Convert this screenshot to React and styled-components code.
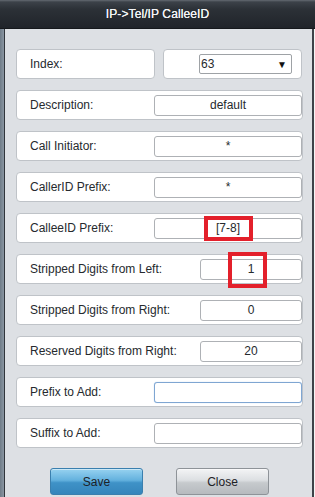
import styled, { createGlobalStyle } from "styled-components";

const GlobalStyle = createGlobalStyle`
  html, body {
    margin: 0;
    padding: 0;
    background: #7f8c98;
    overflow: hidden;
  }
  * {
    box-sizing: border-box;
  }
`;

const Frame = styled.div`
  width: 315px;
  height: 497px;
  display: flex;
  flex-direction: column;
  font-family: "Liberation Sans", Arial, sans-serif;
  font-size: 12px;
  color: #262a2e;
  background: linear-gradient(90deg, #6f7c88 0, #8a96a2 4px, #f4f4f4 313px);
`;

const TitleBar = styled.div`
  height: 29px;
  flex: none;
  display: flex;
  align-items: center;
  justify-content: center;
  color: #f2f4f6;
  font-size: 12px;
  letter-spacing: 0.1px;
  text-shadow: 0 0 0.6px #fff;
  background: linear-gradient(#646a72 0, #3c4249 2px, #2c3137 9px, #20242a 100%);
  border-bottom: 1px solid #15181c;
`;

const Body = styled.div`
  flex: 1;
  margin-left: 4px;
  margin-right: 1px;
  border-left: 1px solid #30353b;
  border-right: 2px solid #3d4248;
  background: #dde0e4;
  padding: 20px 9px 0 11px;
  display: flex;
  flex-direction: column;
  gap: 11px;
`;

const Pair = styled.div`
  display: grid;
  grid-template-columns: 139px 139px;
  gap: 8px;
`;

const Row = styled.div`
  position: relative;
  height: 30px;
  display: flex;
  align-items: center;
  justify-content: space-between;
  background: #fff;
  border: 1px solid #bfc3c8;
  border-radius: 4px;
  padding: 0 0 0 13px;
`;

const Cell = styled(Row)`
  justify-content: ${(p) => (p.$end ? "flex-end" : "flex-start")};
  padding-right: ${(p) => (p.$end ? "9px" : "0")};
`;

const Label = styled.span`
  white-space: nowrap;
`;

const Field = styled.input`
  width: ${(p) => (p.$narrow ? "102px" : "148px")};
  height: 21px;
  border: 1px solid ${(p) => (p.$focus ? "#7fa6d2" : "#aeb1b5")};
  box-shadow: ${(p) => (p.$focus ? "0 0 1px #9cc0e6" : "none")};
  border-radius: 3px;
  background: #fff;
  text-align: center;
  font-family: "Liberation Sans", Arial, sans-serif;
  font-size: 12px;
  color: #262a2e;
  padding: 0 4px;
  outline: none;
`;

const Select = styled.div`
  width: 93px;
  height: 20px;
  border: 1px solid #9ea2a6;
  border-radius: 2px;
  display: flex;
  align-items: center;
  justify-content: space-between;
  padding: 0 4px 0 1px;
  font-size: 12px;
`;

const Caret = styled.span`
  font-size: 10px;
  color: #111;
`;

const Mark = styled.div`
  position: absolute;
  left: ${(p) => p.$x}px;
  top: ${(p) => p.$y}px;
  width: ${(p) => p.$w}px;
  height: ${(p) => p.$h}px;
  border: 4px solid #e3202b;
  pointer-events: none;
`;

const Buttons = styled.div`
  display: flex;
  gap: 33px;
  padding-left: 34px;
  margin-top: 9px;
`;

const Button = styled.button`
  width: 93px;
  height: 27px;
  border-radius: 3px;
  font-family: "Liberation Sans", Arial, sans-serif;
  font-size: 12px;
  color: #1d2126;
  border: 1px solid ${(p) => (p.$primary ? "#3a7fae" : "#8e9398")};
  background: ${(p) =>
    p.$primary
      ? "linear-gradient(#97d2f0 0, #63b1de 45%, #3f92c7 55%, #3585bb 100%)"
      : "linear-gradient(#f3f4f5 0, #dcdfe2 45%, #c6cacd 55%, #b6babe 100%)"};
  box-shadow: inset 0 1px 0 rgba(255, 255, 255, 0.5);
`;

const rows = [
  { label: "Description:", value: "default" },
  { label: "Call Initiator:", value: "*" },
  { label: "CallerID Prefix:", value: "*" },
  { label: "CalleeID Prefix:", value: "[7-8]", mark: { x: 187, y: 2, w: 49, h: 25 } },
  { label: "Stripped Digits from Left:", value: "1", narrow: true, mark: { x: 211, y: -3, w: 39, h: 36 } },
  { label: "Stripped Digits from Right:", value: "0", narrow: true },
  { label: "Reserved Digits from Right:", value: "20", narrow: true },
  { label: "Prefix to Add:", value: "", focus: true },
  { label: "Suffix to Add:", value: "" },
];

export default function App() {
  return (
    <>
      <GlobalStyle />
      <Frame>
        <TitleBar>IP-&gt;Tel/IP CalleeID</TitleBar>
        <Body>
          <Pair>
            <Cell>
              <Label>Index:</Label>
            </Cell>
            <Cell $end>
              <Select>
                <span>63</span>
                <Caret>▼</Caret>
              </Select>
            </Cell>
          </Pair>
          {rows.map((r) => (
            <Row key={r.label}>
              <Label>{r.label}</Label>
              <Field readOnly value={r.value} $narrow={r.narrow} $focus={r.focus} />
              {r.mark && <Mark $x={r.mark.x} $y={r.mark.y} $w={r.mark.w} $h={r.mark.h} />}
            </Row>
          ))}
          <Buttons>
            <Button $primary>Save</Button>
            <Button>Close</Button>
          </Buttons>
        </Body>
      </Frame>
    </>
  );
}
